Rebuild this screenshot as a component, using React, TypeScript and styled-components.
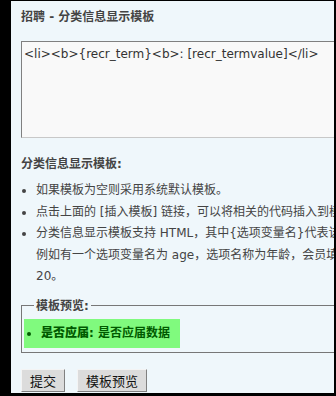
import styled, { createGlobalStyle } from "styled-components"

const GlobalStyle = createGlobalStyle`
    html, body {
        margin: 0;
        padding: 0;
        background: #000;
    }
`

const App = () => {
    return (
        <>
        <GlobalStyle />
        <Frame>
            <Panel>
                <Content>
                    <Title>招聘 - 分类信息显示模板</Title>
                    <TemplateBox defaultValue="<li><b>{recr_term}<b>: [recr_termvalue]</li>" />

                    <SectionTitle>分类信息显示模板:</SectionTitle>
                    <Tips>
                        <Tip>如果模板为空则采用系统默认模板。</Tip>
                        <Tip>点击上面的 [插入模板] 链接，可以将相关的代码插入到模板中。</Tip>
                        <Tip>
                            分类信息显示模板支持 HTML，其中{"{选项变量名}"}代表该选项的名称，[选项变量名value]代表该选项的值。<br />
                            例如有一个选项变量名为 age，选项名称为年龄，会员填写的值为<br />
                            20。
                        </Tip>
                    </Tips>

                    <Preview>
                        <legend>模板预览:</legend>
                        <PreviewItem>
                            <li><b>是否应届</b>: 是否应届数据</li>
                        </PreviewItem>
                    </Preview>

                    <Buttons>
                        <Button>提交</Button>
                        <Button>模板预览</Button>
                    </Buttons>
                </Content>
            </Panel>
        </Frame>
        </>
    )
}

const Frame = styled.div`
    width: 336px;
    height: 396px;
    box-sizing: border-box;
    padding: 1px 2px 3px 11px;
    background: #000;
`

const Panel = styled.div`
    height: 100%;
    background: #eff7fb;
    overflow: hidden;
    padding-left: 10px;
    font-family: Tahoma, "DejaVu Sans", "Noto Sans CJK SC", sans-serif;
    font-size: 12px;
    color: #444;
`

const Content = styled.div`
    width: 640px;
`

const Title = styled.div`
    padding-top: 9px;
    line-height: 14px;
    font-weight: bold;
    color: #444;
`

const TemplateBox = styled.textarea`
    display: block;
    margin: 17px 0 0;
    width: 314px;
    height: 97px;
    box-sizing: border-box;
    padding: 4px 2px;
    resize: none;
    background: #f9f9f9;
    border: 1px solid #c8c8c8;
    border-top-color: #808080;
    border-left-color: #808080;
    font-family: Tahoma, "DejaVu Sans", sans-serif;
    font-size: 12px;
    line-height: 16px;
    color: #333;
    outline: none;
`

const SectionTitle = styled.div`
    margin-top: 19px;
    line-height: 14px;
    font-weight: bold;
`

const Tips = styled.ul`
    margin: 9px 0 0;
    padding-left: 15px;
    line-height: 21.5px;
`

const Tip = styled.li`
    white-space: nowrap;
`

const Preview = styled.fieldset`
    margin: 11px 0 0;
    padding: 6px 2px 4px;
    width: 600px;
    border: 1px solid #777;

    > legend {
        margin-left: 10px;
        padding: 0 2px;
        font-weight: bold;
        line-height: 14px;
        color: #444;
    }
`

const PreviewItem = styled.ul`
    display: inline-block;
    vertical-align: top;
    margin: 0;
    padding: 0 10px 0 17px;
    background: #80fa7e;
    line-height: 29px;
    color: #005a00;
    font-weight: bold;
`

const Buttons = styled.div`
    display: flex;
    gap: 12px;
    margin-top: 16px;
`

const Button = styled.button`
    height: 23px;
    padding: 0 8px;
    background: #dcdcdc;
    border: 1px solid;
    border-color: #f4f4f4 #808080 #808080 #f4f4f4;
    font-family: "Noto Sans CJK SC", sans-serif;
    font-size: 13px;
    color: #111;
`

export default App
